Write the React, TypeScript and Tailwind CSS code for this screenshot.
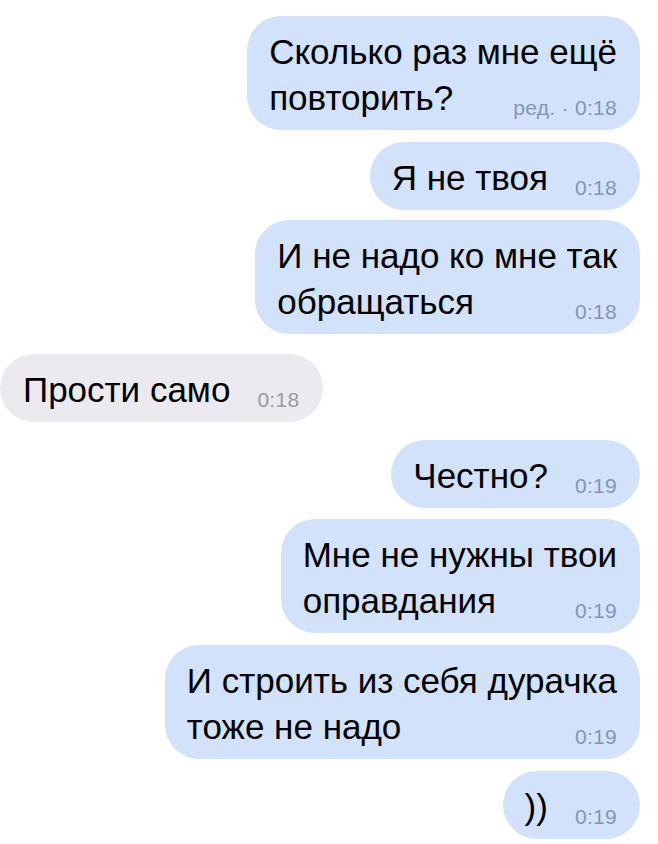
import React from 'react';

type Msg = {
  lines: string[];
  time: string;
  out: boolean;
  gapTop: number;
};

const messages: Msg[] = [
  { lines: ['Сколько раз мне ещё', 'повторить?'], time: 'ред. · 0:18', out: true, gapTop: 0 },
  { lines: ['Я не твоя'], time: '0:18', out: true, gapTop: 12 },
  { lines: ['И не надо ко мне так', 'обращаться'], time: '0:18', out: true, gapTop: 10 },
  { lines: ['Прости само'], time: '0:18', out: false, gapTop: 20 },
  { lines: ['Честно?'], time: '0:19', out: true, gapTop: 18 },
  { lines: ['Мне не нужны твои', 'оправдания'], time: '0:19', out: true, gapTop: 11 },
  { lines: ['И строить из себя дурачка', 'тоже не надо'], time: '0:19', out: true, gapTop: 12 },
  { lines: ['))'], time: '0:19', out: true, gapTop: 12 },
];

const Bubble: React.FC<{ msg: Msg }> = ({ msg }) => {
  const first = msg.lines.slice(0, -1);
  const last = msg.lines[msg.lines.length - 1];

  return (
    <div
      className={`rounded-[34px] pt-[13px] pb-[9px] text-[35px] leading-[46px] text-black ${
        msg.out
          ? 'self-end mr-[18px] bg-[#d2e2fa] pl-[22px] pr-[23px]'
          : 'self-start ml-0 bg-[#ebebef] pl-[23px] pr-[24px]'
      }`}
      style={{ marginTop: msg.gapTop }}
    >
      {first.map((line) => (
        <div key={line} className="whitespace-nowrap">
          {line}
        </div>
      ))}
      <div className="flex items-baseline whitespace-nowrap">
        <span>{last}</span>
        <span
          className={`ml-auto pl-[27px] text-[21px] leading-5 tracking-[0.3px] translate-y-[5px] ${
            msg.out ? 'text-[#8596ad]' : 'text-[#9a9a9f]'
          }`}
        >
          {msg.time}
        </span>
      </div>
    </div>
  );
};

const App: React.FC = () => {
  return (
    <div
      className="w-full h-[844px] overflow-hidden bg-white pt-[16px] flex flex-col"
      style={{ fontFamily: '"Liberation Sans", Arial, sans-serif' }}
    >
      {messages.map((m, i) => (
        <Bubble key={i} msg={m} />
      ))}
    </div>
  );
};

export default App;
